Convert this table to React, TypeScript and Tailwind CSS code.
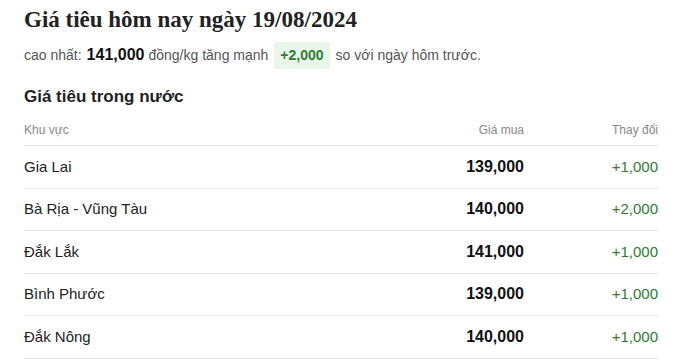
import React from 'react';

interface PriceRow {
  region: string;
  price: string;
  change: string;
}

const rows: PriceRow[] = [
  { region: 'Gia Lai', price: '139,000', change: '+1,000' },
  { region: 'Bà Rịa - Vũng Tàu', price: '140,000', change: '+2,000' },
  { region: 'Đắk Lắk', price: '141,000', change: '+1,000' },
  { region: 'Bình Phước', price: '139,000', change: '+1,000' },
  { region: 'Đắk Nông', price: '140,000', change: '+1,000' },
];

const App: React.FC = () => {
  return (
    <div className="w-[679px] h-[362px] overflow-hidden bg-white px-6 pt-[5px] font-['Liberation_Sans',Arial,sans-serif]">
      <h1 className="text-[23px] leading-[30px] font-bold text-[#222] font-['Liberation_Serif',serif]">
        Giá tiêu hôm nay ngày 19/08/2024
      </h1>

      <p className="mt-[8px] flex items-center text-[14px] text-[#555] h-[24px]">
        <span>cao nhất:</span>
        <span className="ml-[5px] text-[16px] font-bold text-[#111]">141,000</span>
        <span className="ml-[4px]">đồng/kg tăng mạnh</span>
        <span className="ml-[6px] rounded-[3px] bg-[#e8f5e9] px-[6px] py-[3px] text-[14px] font-bold text-[#2e7d32]">
          +2,000
        </span>
        <span className="ml-[6px]">so với ngày hôm trước.</span>
      </p>

      <h2 className="mt-[19px] text-[17px] leading-[22px] font-bold text-[#222]">Giá tiêu trong nước</h2>

      <div className="mt-[11px] w-[634px]">
        <div className="flex h-[27px] items-start border-b border-[#e8e8e8] text-[12px] text-[#888]">
          <div className="flex-1 pt-[2px]">Khu vực</div>
          <div className="w-[200px] pt-[2px] text-right">Giá mua</div>
          <div className="w-[134px] pt-[2px] text-right">Thay đổi</div>
        </div>
        {rows.map(row => (
          <div key={row.region} className="flex h-[42.5px] items-center border-b border-[#e8e8e8] text-[15px]">
            <div className="flex-1 text-[#222]">{row.region}</div>
            <div className="w-[200px] text-right text-[16px] font-bold text-[#111]">{row.price}</div>
            <div className="w-[134px] text-right text-[#2e7d32]">{row.change}</div>
          </div>
        ))}
      </div>
    </div>
  );
};

export default App;
